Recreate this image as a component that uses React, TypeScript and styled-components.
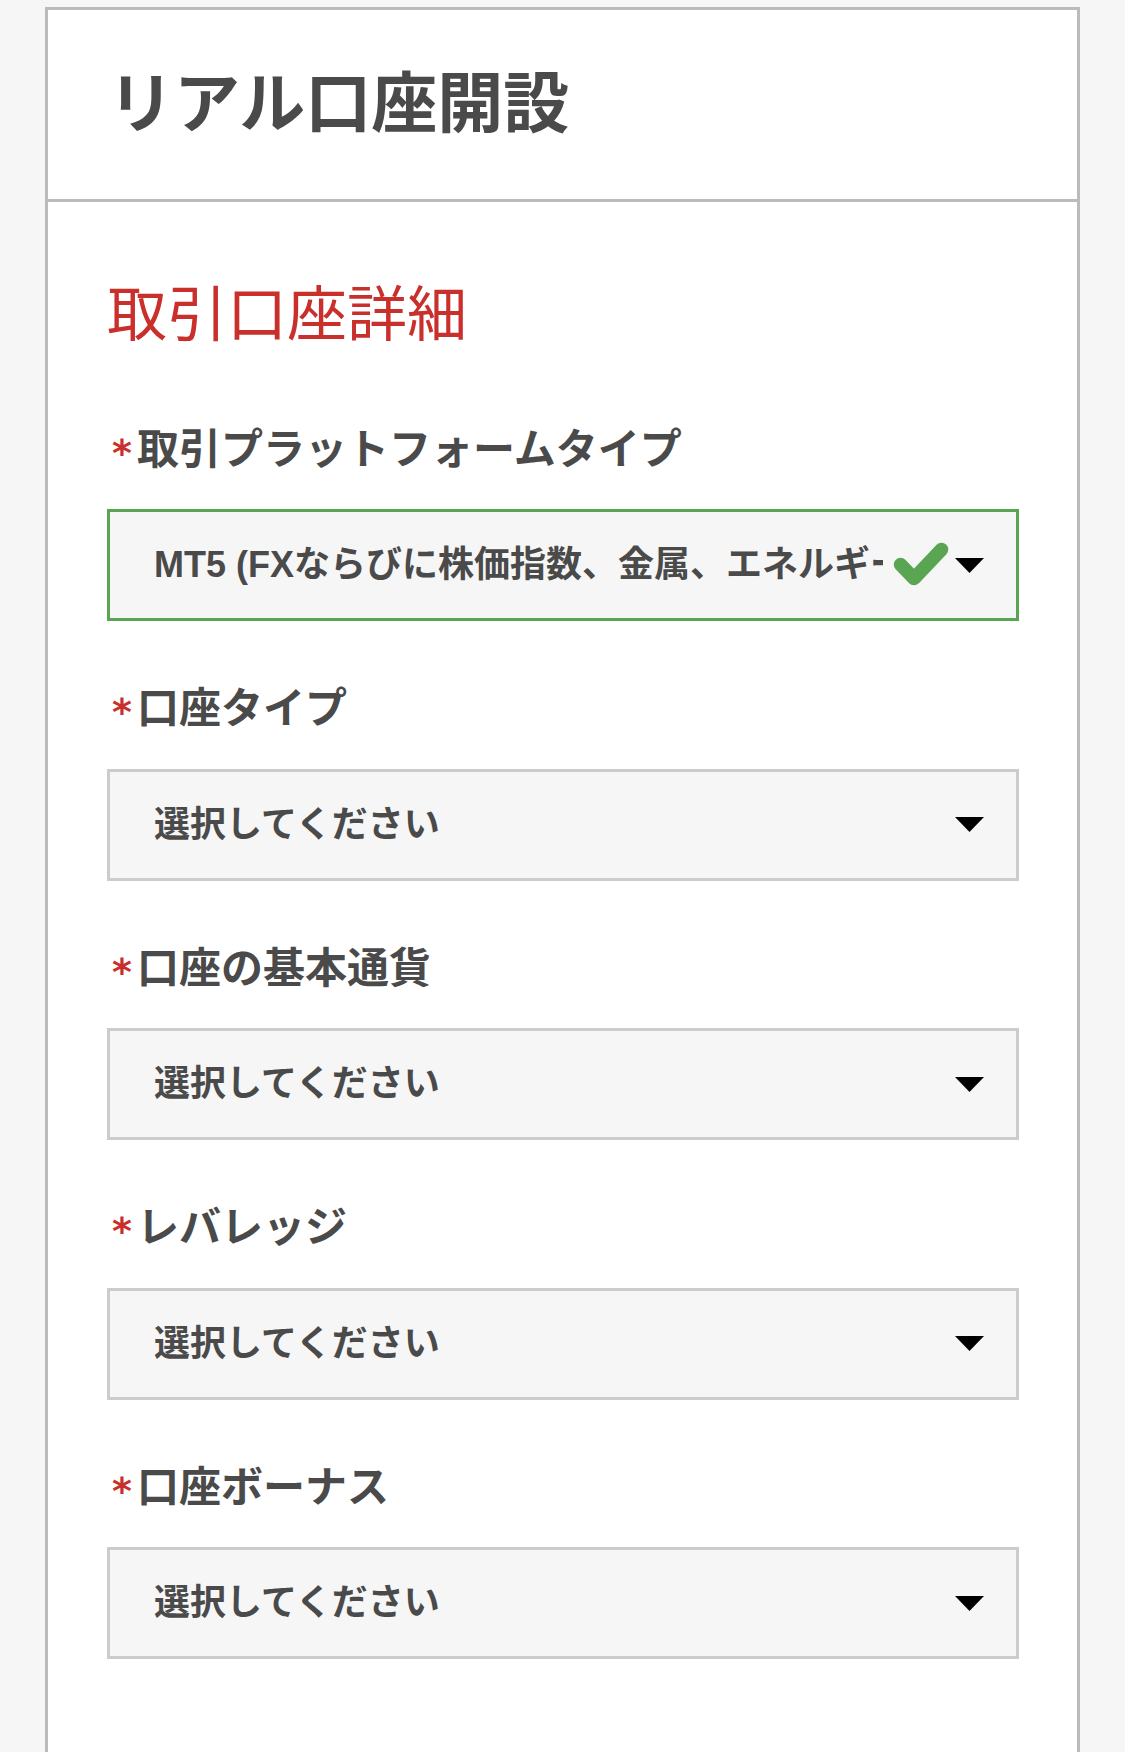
import React from "react";
import styled, { createGlobalStyle } from "styled-components";

const GlobalStyle = createGlobalStyle`
  html, body {
    margin: 0;
    padding: 0;
    background: #f6f6f6;
  }
  body {
    font-family: "Liberation Sans", "Noto Sans CJK JP", sans-serif;
    color: #4a4a4a;
  }
`;

const Page = styled.div`
  padding: 7px 45px 0;
`;

const Card = styled.div`
  background: #ffffff;
  border: 3px solid #bbbbbb;
`;

const Header = styled.header`
  display: flex;
  align-items: center;
  height: 189px;
  padding: 0 60px;
  border-bottom: 3px solid #bbbbbb;
`;

const Title = styled.h1`
  margin: 0;
  font-size: 66px;
  line-height: 1.2;
  font-weight: 700;
  color: #4a4a4a;
`;

const Body = styled.div`
  padding: 77.5px 58px 200px 59px;
`;

const SectionTitle = styled.h2`
  margin: 0 0 73px;
  font-size: 60px;
  line-height: 72px;
  font-weight: 400;
  color: #c9302c;
`;

const Field = styled.div`
  margin-bottom: 63px;
`;

const Label = styled.label`
  display: flex;
  align-items: center;
  margin-bottom: 34.5px;
  font-size: 42px;
  line-height: 50px;
  font-weight: 700;
  color: #4a4a4a;
`;

const Star = styled.span`
  display: inline-block;
  width: 30px;
  padding-top: 6px;
  text-align: center;
  font-family: "DejaVu Sans", sans-serif;
  font-size: 38px;
  line-height: 1;
  font-weight: 700;
  color: #c9302c;
`;

const SelectBox = styled.div<{ $valid?: boolean }>`
  display: flex;
  align-items: center;
  box-sizing: border-box;
  height: 112px;
  padding: 0 32px 0 44px;
  background: #f6f6f6;
  border: 3px solid ${(p) => (p.$valid ? "#5aa552" : "#cccccc")};
`;

const SelectText = styled.span`
  flex: 1;
  min-width: 0;
  overflow: hidden;
  white-space: nowrap;
  font-size: 36px;
  line-height: 44px;
  font-weight: 700;
  color: #4a4a4a;
`;

const Spacer = styled.span`
  flex: 1;
`;

const CheckIcon = styled.svg`
  flex: none;
  margin-left: 10px;
  margin-top: -2px;
`;

const Caret = styled.svg`
  flex: none;
  margin-left: 6px;
`;

const Check = () => (
  <CheckIcon width="56" height="44" viewBox="0 0 56 44">
    <polyline
      points="7.5,22.5 21,36.5 48.5,7.5"
      fill="none"
      stroke="#5aa552"
      strokeWidth="13.5"
      strokeLinecap="round"
      strokeLinejoin="round"
    />
  </CheckIcon>
);

const Arrow = () => (
  <Caret width="29" height="15" viewBox="0 0 29 15">
    <polygon points="0,0 29,0 14.5,15" fill="#000" />
  </Caret>
);

type FieldDef = { label: string; value: string; valid?: boolean };

const fields: FieldDef[] = [
  {
    label: "取引プラットフォームタイプ",
    value: "MT5 (FXならびに株価指数、金属、エネルギー、ソフトコモディティ)",
    valid: true,
  },
  { label: "口座タイプ", value: "選択してください" },
  { label: "口座の基本通貨", value: "選択してください" },
  { label: "レバレッジ", value: "選択してください" },
  { label: "口座ボーナス", value: "選択してください" },
];

export default function App() {
  return (
    <>
      <GlobalStyle />
      <Page>
        <Card>
          <Header>
            <Title>リアル口座開設</Title>
          </Header>
          <Body>
            <SectionTitle>取引口座詳細</SectionTitle>
            {fields.map((f) => (
              <Field key={f.label}>
                <Label>
                  <Star>*</Star>
                  {f.label}
                </Label>
                <SelectBox $valid={f.valid}>
                  <SelectText>{f.value}</SelectText>
                  {f.valid ? <Check /> : <Spacer />}
                  <Arrow />
                </SelectBox>
              </Field>
            ))}
          </Body>
        </Card>
      </Page>
    </>
  );
}
